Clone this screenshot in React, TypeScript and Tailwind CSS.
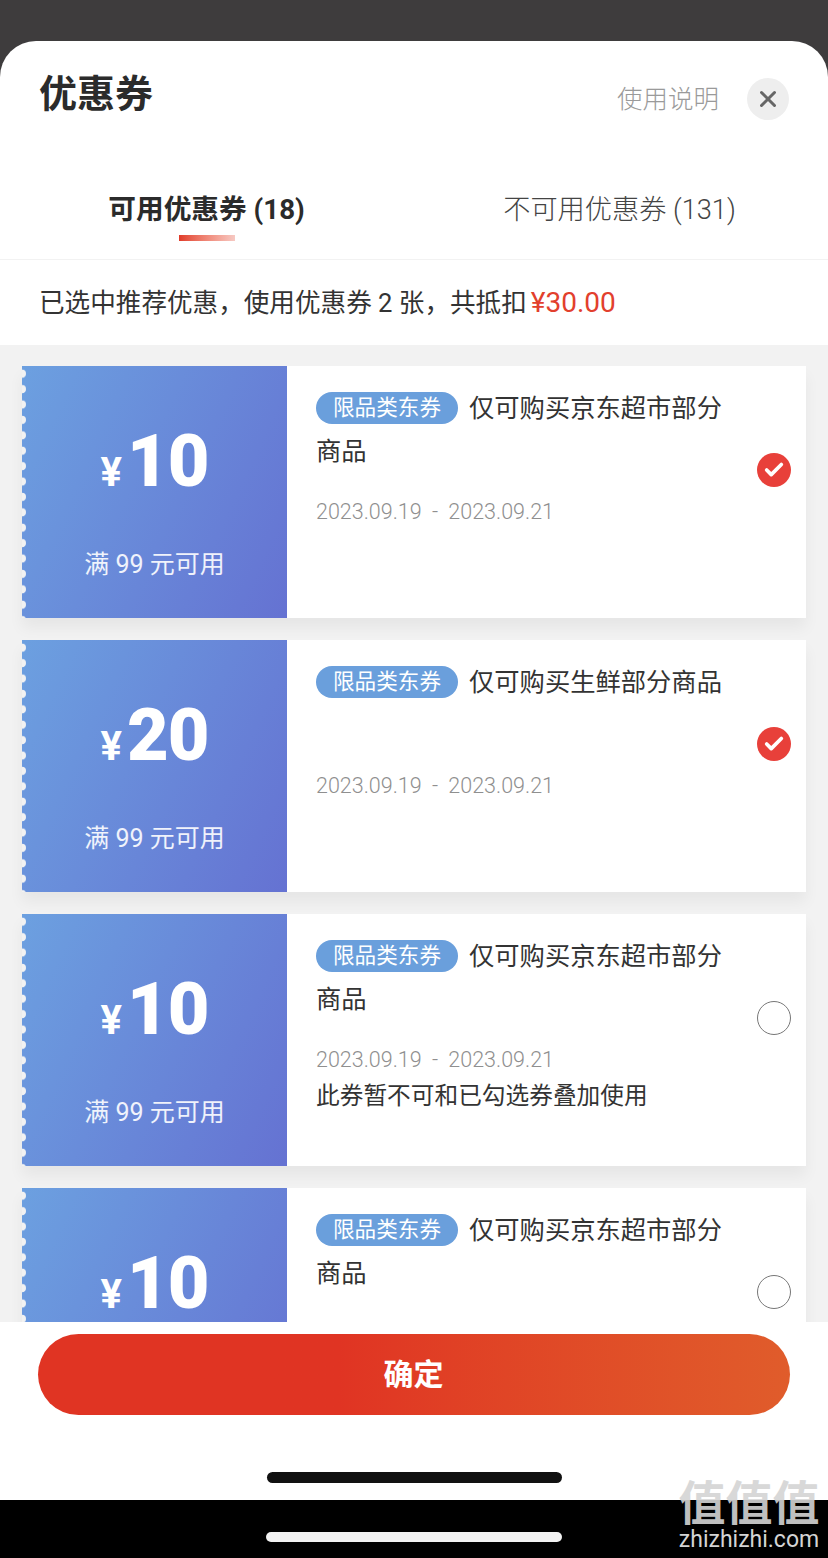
import { X, Check } from 'lucide-react';

const coupons = [
  { amount: '10', scope: '仅可购买京东超市部分商品', checked: true },
  { amount: '20', scope: '仅可购买生鲜部分商品', checked: true },
  { amount: '10', scope: '仅可购买京东超市部分商品', checked: false, note: '此券暂不可和已勾选券叠加使用' },
  { amount: '10', scope: '仅可购买京东超市部分商品', checked: false },
];

function Scallops() {
  return (
    <svg className="absolute left-0 top-0 h-full w-[5px]" viewBox="0 0 5 252" preserveAspectRatio="none">
      <defs>
        <pattern id="scallop" width="5" height="15.4" patternUnits="userSpaceOnUse">
          <circle cx="0" cy="7.7" r="4" fill="#f2f2f2" />
        </pattern>
      </defs>
      <rect width="5" height="252" fill="url(#scallop)" />
    </svg>
  );
}

function CouponCard({ amount, scope, checked, note }: { amount: string; scope: string; checked: boolean; note?: string }) {
  return (
    <div className="flex h-[252px] shrink-0 bg-white shadow-[0_10px_14px_rgba(0,0,0,0.05)]">
      {/* Amount */}
      <div className="relative flex w-[265px] shrink-0 flex-col items-center bg-[linear-gradient(115deg,#6ca0e0,#6572d2)] text-white">
        <Scallops />
        <div className="mt-[54px] flex h-[84px] items-baseline">
          <span className="mr-[5px] text-[40px] font-bold leading-none">¥</span>
          <span className="text-[72px] font-black leading-[84px] tracking-[-1px]">{amount}</span>
        </div>
        <div className="mt-[45px] text-[25px] leading-[32px] text-white/90">满 99 元可用</div>
      </div>

      {/* Details */}
      <div className="min-w-0 flex-1 pl-[29px] pt-[21px]">
        <div className="h-[88px] w-[410px] text-[25.3px] leading-[43px] text-[#333]">
          <span className="mr-[11px] inline-block h-[32px] rounded-full bg-[#6a9fdc] px-[17px] align-[2px] text-[21.6px] leading-[32px] text-white">
            限品类东券
          </span>
          {scope}
        </div>
        <div className="mt-[21px] text-[21.5px] font-light leading-[32px] text-[#8f8f8f] [word-spacing:5px]">
          2023.09.19 - 2023.09.21
        </div>
        {note && <div className="mt-[4px] text-[23.7px] leading-[32px] text-[#333]">{note}</div>}
      </div>

      {/* Radio */}
      <div className="w-[49px] shrink-0 pt-[87px]">
        {checked ? (
          <div className="flex h-[34px] w-[34px] items-center justify-center rounded-full bg-[#e8403a]">
            <Check className="h-[22px] w-[22px] text-white" strokeWidth={4} />
          </div>
        ) : (
          <div className="h-[34px] w-[34px] rounded-full border border-[#777]" />
        )}
      </div>
    </div>
  );
}

export default function App() {
  return (
    <div className="relative flex h-[1558px] w-[828px] flex-col overflow-hidden bg-[#3e3c3d] font-[Roboto,'Noto_Sans_CJK_SC',sans-serif]">
      <div className="mt-[41px] flex h-[1459px] flex-col overflow-hidden rounded-t-[36px] bg-white">
        {/* Header */}
        <div className="flex h-[112px] shrink-0 items-start justify-between pl-[39px] pr-[39px]">
          <h1 className="mt-[27px] text-[38px] font-bold leading-[52px] text-[#2b2b2b]">优惠券</h1>
          <div className="mt-[37px] flex items-center gap-[28px]">
            <span className="text-[25.5px] font-light text-[#9a9a9a]">使用说明</span>
            <span className="flex h-[42px] w-[42px] items-center justify-center rounded-full bg-[#eeeeee]">
              <X className="h-[26px] w-[26px] text-[#666]" strokeWidth={2.75} />
            </span>
          </div>
        </div>

        {/* Tabs */}
        <div className="flex h-[107px] shrink-0 border-b border-[#f2f2f2] pt-[35px]">
          <div className="flex w-[413px] flex-col items-center">
            <span className="text-[27.7px] font-bold leading-[44px] text-[#2b2b2b]">可用优惠券 (18)</span>
            <span className="ml-[1px] mt-[3px] h-[6px] w-[56px] bg-gradient-to-r from-[#e03a28] to-[#f6c9c3]" />
          </div>
          <div className="flex flex-1 justify-center">
            <span className="ml-[-2px] text-[27.2px] font-light leading-[44px] text-[#444]">不可用优惠券 (131)</span>
          </div>
        </div>

        {/* Summary */}
        <div className="flex h-[85px] shrink-0 items-center pl-[39px] pt-[1px] text-[25.6px] text-[#333]">
          已选中推荐优惠，使用优惠券 2 张，共抵扣
          <span className="ml-[4px] text-[28px] text-[#e2402d]">¥30.00</span>
        </div>

        {/* Coupon list */}
        <div className="flex min-h-0 flex-1 flex-col gap-[22px] overflow-hidden bg-[#f2f2f2] pl-[22px] pr-[22px] pt-[21px]">
          {coupons.map((c, i) => (
            <CouponCard key={i} {...c} />
          ))}
        </div>

        {/* Footer */}
        <div className="flex h-[178px] shrink-0 flex-col items-center bg-white pt-[12px]">
          <button className="ml-[-1px] h-[81px] w-[752px] rounded-full bg-gradient-to-r from-[#e03423] from-40% to-[#e05c2b] text-[30px] font-bold text-white">
            确定
          </button>
          <div className="mt-[57px] h-[11px] w-[295px] rounded-full bg-[#111]" />
        </div>
      </div>

      {/* Bottom strip */}
      <div className="flex h-[58px] shrink-0 justify-center bg-black pt-[32px]">
        <div className="h-[10px] w-[296px] rounded-full bg-[#f2f2f2]" />
      </div>

      {/* Watermark */}
      <div className="absolute left-[678px] top-[1476px] flex w-[142px] flex-col items-center text-[#d4d4d4]">
        <span className="whitespace-nowrap text-[47px] font-bold leading-[56px] opacity-90">值值值</span>
        <span className="mt-[-7px] text-[23px] leading-[30px]">zhizhizhi.com</span>
      </div>
    </div>
  );
}
